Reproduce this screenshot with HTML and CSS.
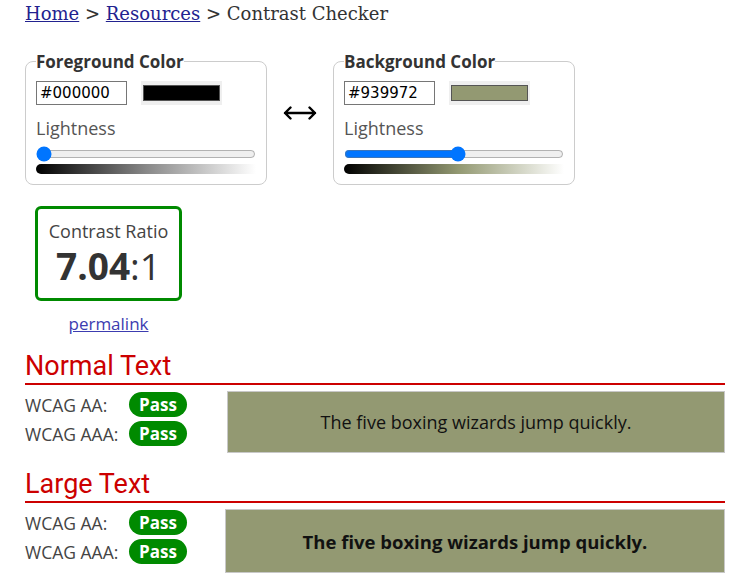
FILE: index.html
```html
<!DOCTYPE html>
<html lang="en">
<head>
<meta charset="utf-8">
<title>Contrast Checker</title>
<link rel="stylesheet" href="styles.css">
</head>
<body>
<div class="page">
  <nav class="crumbs"><a href="#">Home</a> &gt; <a href="#">Resources</a> &gt; Contrast Checker</nav>

  <div class="pickers">
    <fieldset class="picker">
      <legend>Foreground Color</legend>
      <div class="hexrow">
        <input class="hex" type="text" value="#000000">
        <span class="swatch"><span class="swatch-fill swatch-fg"></span></span>
      </div>
      <div class="light-label">Lightness</div>
      <input class="slider" type="range" min="0" max="100" value="0">
      <div class="grad grad-fg"></div>
    </fieldset>

    <div class="swap" aria-label="swap colors">
      <svg width="34" height="14" viewBox="0 0 34 14" aria-hidden="true">
        <path d="M2 7 H32 M7.5 1.5 L2 7 L7.5 12.5 M26.5 1.5 L32 7 L26.5 12.5" fill="none" stroke="#000" stroke-width="2.4" stroke-linecap="round" stroke-linejoin="round"/>
      </svg>
    </div>

    <fieldset class="picker">
      <legend>Background Color</legend>
      <div class="hexrow">
        <input class="hex" type="text" value="#939972">
        <span class="swatch"><span class="swatch-fill swatch-bg"></span></span>
      </div>
      <div class="light-label">Lightness</div>
      <input class="slider" type="range" min="0" max="100" value="52">
      <div class="grad grad-bg"></div>
    </fieldset>
  </div>

  <div class="ratio-wrap">
    <div class="ratio">
      <div class="ratio-title">Contrast Ratio</div>
      <div class="ratio-value"><b>7.04</b>:1</div>
    </div>
    <a class="permalink" href="#">permalink</a>
  </div>

  <section class="result">
    <h2>Normal Text</h2>
    <div class="result-body">
      <div class="checks">
        <div class="check"><span class="check-label">WCAG AA:</span><span class="pass">Pass</span></div>
        <div class="check"><span class="check-label">WCAG AAA:</span><span class="pass">Pass</span></div>
      </div>
      <div class="sample sample-normal">The five boxing wizards jump quickly.</div>
    </div>
  </section>

  <section class="result result-large">
    <h2>Large Text</h2>
    <div class="result-body">
      <div class="checks">
        <div class="check"><span class="check-label">WCAG AA:</span><span class="pass">Pass</span></div>
        <div class="check"><span class="check-label">WCAG AAA:</span><span class="pass">Pass</span></div>
      </div>
      <div class="sample sample-large">The five boxing wizards jump quickly.</div>
    </div>
  </section>
</div>
</body>
</html>
```

FILE: styles.css
```css
html, body {
  margin: 0;
  padding: 0;
  background: #fff;
}

body {
  font-family: "Open Sans", "DejaVu Sans", sans-serif;
  color: #444;
}

.page {
  padding: 0 16px 0 25px;
}

.crumbs {
  font-family: "DejaVu Serif", "Liberation Serif", serif;
  font-size: 18px;
  line-height: 28px;
  color: #333;
}

.crumbs a {
  color: #22228f;
}

.pickers {
  display: flex;
  align-items: flex-start;
  margin-top: 22px;
}

.picker {
  box-sizing: border-box;
  width: 242px;
  margin: 0;
  padding: 8px 10px 10px 10px;
  border: 1px solid #ccc;
  border-radius: 8px;
}

.picker legend {
  padding: 0;
  font-size: 17px;
  line-height: 23px;
  font-weight: 700;
  color: #333;
}

.hexrow {
  display: flex;
  align-items: center;
  gap: 14px;
}

.hex {
  box-sizing: border-box;
  width: 91px;
  height: 24px;
  margin: 0;
  padding: 0 3px;
  border: 1px solid #767676;
  font-family: "DejaVu Sans", sans-serif;
  font-size: 15px;
  color: #000;
}

.swatch {
  box-sizing: border-box;
  display: flex;
  width: 81px;
  height: 24px;
  padding: 4px 2px;
  background: #efefef;
}

.swatch-fill {
  flex: 1;
  border: 1px solid #555;
}

.swatch-fg { background: #000; }
.swatch-bg { background: #939972; }

.light-label {
  margin-top: 11px;
  font-size: 18px;
  line-height: 24px;
  color: #555;
}

.slider {
  display: block;
  width: 220px;
  margin: 6px 0 2px 0;
}

.grad {
  width: 220px;
  height: 10px;
  border-radius: 5px 0 0 5px;
}

.grad-fg {
  background: linear-gradient(to right, #000, #888 50%, #fff);
}

.grad-bg {
  background: linear-gradient(to right, #000, #939972 52%, #fff);
}

.swap {
  display: flex;
  justify-content: center;
  width: 66px;
  margin-top: 56px;
}

.ratio-wrap {
  display: flex;
  flex-direction: column;
  align-items: center;
  width: 147px;
  margin: 21px 0 0 10px;
}

.ratio {
  box-sizing: border-box;
  width: 147px;
  height: 95px;
  border: 3px solid #008a00;
  border-radius: 6px;
  text-align: center;
  color: #333;
}

.ratio-title {
  margin-top: 10px;
  font-size: 18px;
  line-height: 24px;
  color: #444;
}

.ratio-value {
  font-size: 37px;
  line-height: 46px;
}

.ratio-value b {
  font-weight: 700;
}

.permalink {
  margin-top: 11px;
  font-size: 17px;
  line-height: 24px;
  color: #3c3cb0;
}

.result {
  margin-top: 14px;
}

.result-large {
  margin-top: 15px;
}

.result h2 {
  margin: 0;
  padding-bottom: 1px;
  font-family: Roboto, "Noto Sans", sans-serif;
  font-weight: 400;
  font-size: 27px;
  line-height: 32px;
  color: #cc0000;
  border-bottom: 2px solid #cc0000;
}

.result-body {
  display: flex;
  align-items: flex-start;
  padding-top: 7px;
}

.checks {
  width: 202px;
  flex: none;
}

.check {
  display: flex;
  align-items: center;
  height: 25px;
  margin-bottom: 4px;
}

.check-label {
  width: 104px;
  font-size: 17.5px;
  color: #444;
}

.pass {
  box-sizing: border-box;
  width: 58px;
  height: 25px;
  border-radius: 13px;
  background: #008a00;
  color: #fff;
  font-weight: 700;
  font-size: 17px;
  line-height: 25px;
  text-align: center;
}

.sample {
  box-sizing: border-box;
  flex: 1;
  display: flex;
  align-items: center;
  justify-content: center;
  margin-top: -1px;
  background: #939972;
  border: 1px solid #c8c8c8;
  color: #111;
}

.sample-normal {
  height: 62px;
  font-size: 18px;
}

.sample-large {
  height: 64px;
  margin-left: -2px;
  font-size: 18.5px;
  font-weight: 700;
}
```
